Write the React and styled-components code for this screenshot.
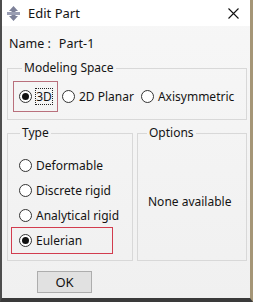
import React from 'react'
import styled, { createGlobalStyle } from 'styled-components'

const Global = createGlobalStyle`
    html, body {
        margin: 0;
        padding: 0;
        background: #fff;
    }
    body {
        font-family: "Noto Sans", "Noto Sans CJK SC", sans-serif;
    }
`

const Window = styled.div`
    width: 253px;
    height: 302px;
    box-sizing: border-box;
    border-left: 2px solid #4d4d4d;
    border-right: 3px solid #a59677;
    border-bottom: 4px solid #3a3a3a;
    background: linear-gradient(#f7f7f7, #f0f0f0);
    display: flex;
    flex-direction: column;
    font-size: 12px;
    color: #141414;
`

const TitleBar = styled.div`
    height: 26px;
    flex-shrink: 0;
    background: #fff;
    display: flex;
    align-items: center;
    padding: 0 11px 0 4px;
    gap: 7px;
    font-size: 13px;
`

const Title = styled.span`
    flex: 1;
`

const Body = styled.div`
    padding: 0 2px 0 5px;
    display: flex;
    flex-direction: column;
`

const NameRow = styled.div`
    height: 34px;
    display: flex;
    align-items: center;
    gap: 8px;
    padding-left: 2px;
    font-size: 12.5px;
`

const Group = styled.fieldset`
    margin: ${p => p.$margin || '0'};
    padding: ${p => p.$pad || '0'};
    border: 1px solid #d8d8d8;
    min-width: 0;
    width: ${p => p.$width || 'auto'};
    box-sizing: border-box;
    legend {
        margin-left: ${p => p.$legendLeft || 9}px;
        padding: 0 2px;
        line-height: 16px;
        font-size: 12px;
    }
`

const SpaceRow = styled.div`
    display: flex;
    align-items: center;
    gap: 3px;
`

const Option = styled.label`
    display: flex;
    align-items: center;
    gap: ${p => p.$gap || 4}px;
    box-sizing: border-box;
    border: 1px solid ${p => p.$marked || 'transparent'};
    padding: ${p => p.$pad || '0'};
    height: ${p => p.$height || 'auto'};
    width: ${p => p.$width || 'auto'};
    margin: ${p => p.$margin || '0'};
    white-space: nowrap;
`

const Circle = styled.span`
    width: 13px;
    height: 13px;
    box-sizing: border-box;
    border-radius: 50%;
    border: 1px solid #333;
    background: #fff;
    display: flex;
    align-items: center;
    justify-content: center;
    flex-shrink: 0;
    &::after {
        content: '';
        width: 7px;
        height: 7px;
        border-radius: 50%;
        background: ${p => (p.$on ? '#111' : 'transparent')};
    }
`

const Focus = styled.span`
    border: 1px dotted #222;
    line-height: 15px;
    width: 17px;
    text-align: center;
`

const Columns = styled.div`
    display: flex;
    margin-top: 5px;
    gap: 4px;
`

const TypeList = styled.div`
    display: flex;
    flex-direction: column;
`

const NoneText = styled.div`
    padding: 53px 0 0 10px;
    line-height: 16px;
`

const Footer = styled.div`
    margin-top: 10px;
    padding-left: 30px;
`

const OkButton = styled.button`
    width: 55px;
    height: 22px;
    background: #e1e1e1;
    border: 1px solid #adadad;
    font-family: inherit;
    font-size: 13px;
    color: #111;
    padding: 0;
`

const AppIcon = () => (
    <svg width="15" height="15" viewBox="0 0 15 15">
        <polygon points="7.5,0 12,5 9.5,5 9.5,10 12,10 7.5,15 3,10 5.5,10 5.5,5 3,5" fill="#7d8199" />
        <rect x="1" y="6" width="13" height="3" fill="#9a9eb3" />
    </svg>
)

const CloseIcon = () => (
    <svg width="11" height="11" viewBox="0 0 11 11">
        <path d="M0.5 0.5 L10.5 10.5 M10.5 0.5 L0.5 10.5" stroke="#111" strokeWidth="1.1" />
    </svg>
)

const types = ['Deformable', 'Discrete rigid', 'Analytical rigid', 'Eulerian']

export default function App() {
    return (
        <>
            <Global />
            <Window>
                <TitleBar>
                    <AppIcon />
                    <Title>Edit Part</Title>
                    <CloseIcon />
                </TitleBar>
                <Body>
                    <NameRow>
                        <span>Name :</span>
                        <span>Part-1</span>
                    </NameRow>
                    <Group $pad="5px 5px 7px 5px" $margin="0 1px 0 0" $legendLeft={9}>
                        <legend>Modeling Space</legend>
                        <SpaceRow>
                            <Option $marked="#b9707c" $pad="0 4px 0 5px" $height="31px" $width="45px" $gap={3}>
                                <Circle $on />
                                <Focus>3D</Focus>
                            </Option>
                            <Option>
                                <Circle />
                                2D Planar
                            </Option>
                            <Option $margin="0 0 0 2px">
                                <Circle />
                                Axisymmetric
                            </Option>
                        </SpaceRow>
                    </Group>
                    <Columns>
                        <Group $width="126px" $pad="12px 0 6px 3px" $legendLeft={9}>
                            <legend>Type</legend>
                            <TypeList>
                                {types.map(t => {
                                    const last = t === 'Eulerian'
                                    return (
                                        <Option
                                            key={t}
                                            $marked={last ? '#d23c4e' : null}
                                            $height={last ? '27px' : '25px'}
                                            $width="102px"
                                            $margin={last ? '-1px 0 0 0' : '0'}
                                            $pad="0 0 0 7px"
                                        >
                                            <Circle $on={last} />
                                            {t}
                                        </Option>
                                    )
                                })}
                            </TypeList>
                        </Group>
                        <Group $width="110px" $legendLeft={9}>
                            <legend>Options</legend>
                            <NoneText>None available</NoneText>
                        </Group>
                    </Columns>
                    <Footer>
                        <OkButton>OK</OkButton>
                    </Footer>
                </Body>
            </Window>
        </>
    )
}
